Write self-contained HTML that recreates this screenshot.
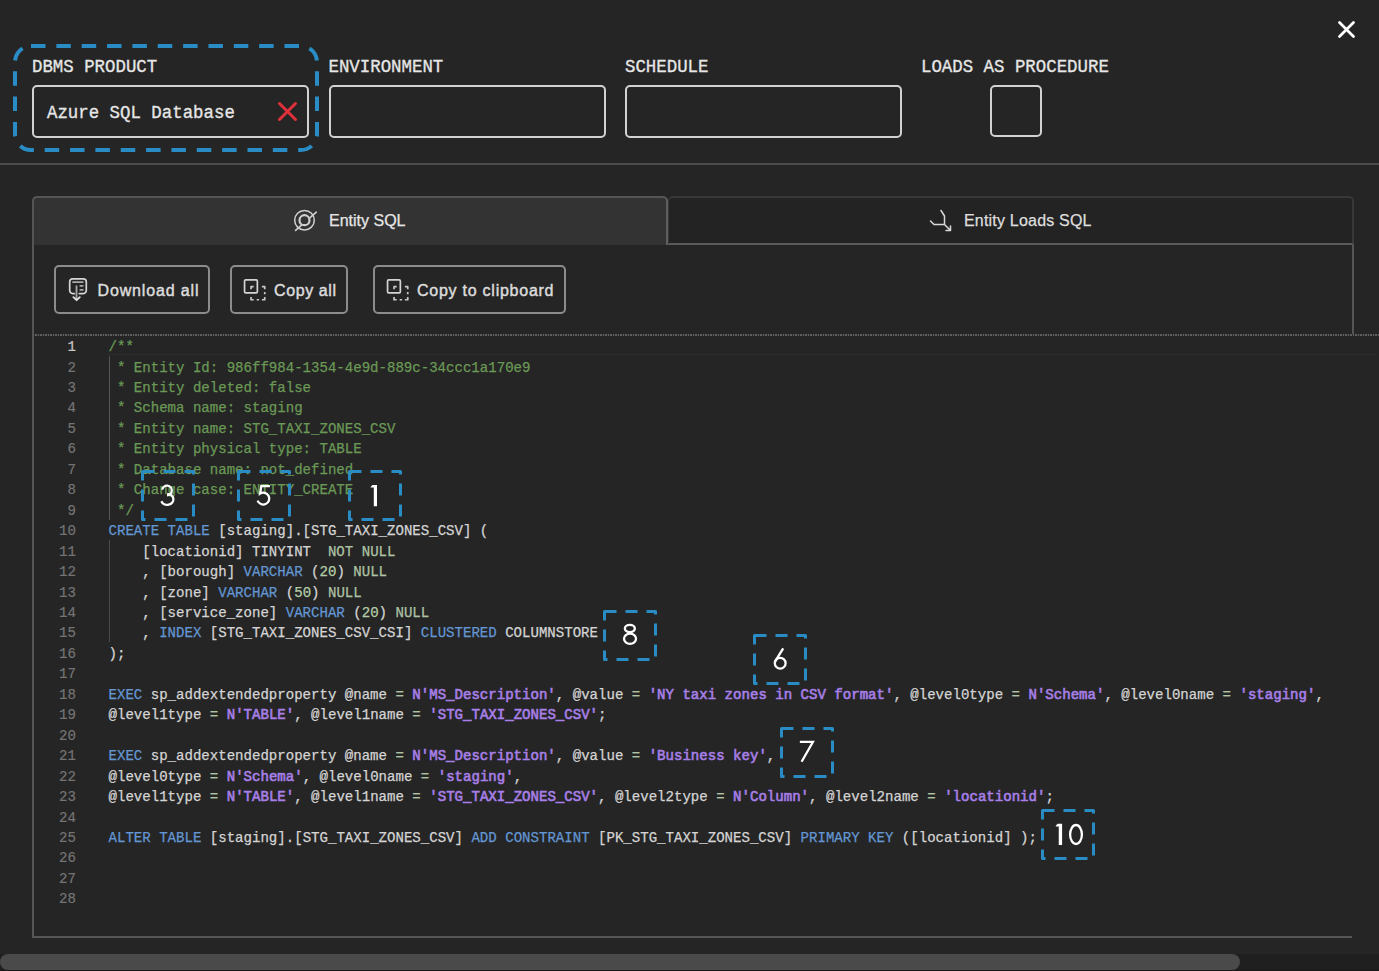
<!DOCTYPE html>
<html><head><meta charset="utf-8">
<style>
html,body{margin:0;padding:0;}
body{width:1379px;height:971px;overflow:hidden;background:#252525;position:relative;font-family:"Liberation Sans",sans-serif;}
.abs{position:absolute;}
.lbl{position:absolute;font-family:"Liberation Mono",monospace;font-size:17.4px;line-height:20px;color:#e6e6e6;white-space:pre;transform:scaleY(1.065);transform-origin:0 15px;-webkit-text-stroke:0.3px #e6e6e6;}
.inp{position:absolute;box-sizing:border-box;border:2px solid #d2d2d2;border-radius:5px;}
.tab{position:absolute;box-sizing:border-box;}
.btn{position:absolute;box-sizing:border-box;border:2px solid #8c8c8c;border-radius:5px;color:#dcdcdc;font-size:16px;letter-spacing:0.6px;-webkit-text-stroke:0.45px #dcdcdc;}
.btn span{position:absolute;line-height:20px;white-space:pre;}
.btn svg{position:absolute;}
.code{position:absolute;left:0;top:0;font-family:"Liberation Mono",monospace;font-size:14.072px;line-height:20.46px;white-space:pre;color:#d4d4d4;-webkit-text-stroke:0.25px currentColor;}
.ln{position:absolute;font-family:"Liberation Mono",monospace;font-size:14.072px;line-height:20.46px;white-space:pre;color:#747474;text-align:right;-webkit-text-stroke:0.2px currentColor;}
.c{color:#6a9955}
.k{color:#6396d2}
.s{color:#a77fe6;-webkit-text-stroke:0.6px #a77fe6}
.o{color:#aec3a4}
.n{color:#b5cea8}
.box{position:absolute;}
.dg{position:absolute;left:0;top:0;width:54px;height:51px;line-height:50px;text-align:center;font-size:30.5px;color:#fff;}
</style></head>
<body>
<!-- close X -->
<svg class="abs" style="left:1330px;top:13px" width="33" height="33" viewBox="0 0 33 33"><path d="M9.5 9.5L23.5 23.5M23.5 9.5L9.5 23.5" stroke="#fff" stroke-width="2.8" stroke-linecap="round"/></svg>

<!-- labels -->
<div class="lbl" style="left:32px;top:58.3px">DBMS PRODUCT</div>
<div class="lbl" style="left:328.5px;top:58.3px">ENVIRONMENT</div>
<div class="lbl" style="left:625px;top:58.3px">SCHEDULE</div>
<div class="lbl" style="left:921px;top:58.3px">LOADS AS PROCEDURE</div>

<!-- inputs -->
<div class="inp" style="left:32px;top:85px;width:277px;height:53px"></div>
<div class="lbl" style="left:47px;top:103.5px">Azure SQL Database</div>
<svg class="abs" style="left:276px;top:100px" width="23" height="23" viewBox="0 0 23 23"><path d="M3.5 3.5L19.5 19.5M19.5 3.5L3.5 19.5" stroke="#e0303a" stroke-width="3" stroke-linecap="round"/></svg>
<div class="inp" style="left:329px;top:85px;width:277px;height:53px"></div>
<div class="inp" style="left:625px;top:85px;width:277px;height:53px"></div>
<div class="inp" style="left:990px;top:85px;width:52px;height:52px"></div>

<!-- dashed highlight -->
<svg class="abs" style="left:0;top:0" width="340" height="170"><rect x="15" y="46" width="302" height="104" rx="16" fill="none" stroke="#2a8cc4" stroke-width="4" stroke-dasharray="14.5 10.85"/></svg>

<!-- divider -->
<div class="abs" style="left:0;top:163px;width:1379px;height:2px;background:#4c4c4c"></div>

<!-- tabs -->
<div class="tab" style="left:32px;top:196px;width:636px;height:49px;background:#333;border:2px solid #555;border-right-color:#5f5f5f;border-bottom:none;border-radius:5px 5px 0 0"></div>
<div class="tab" style="left:668px;top:196px;width:686px;height:49px;background:#232323;border:2px solid #383838;border-left:1px solid #383838;border-bottom:2px solid #5a5a5a;border-radius:5px 5px 0 0"></div>


<!-- tab labels -->
<svg class="abs" style="left:290px;top:206px" width="30" height="30" viewBox="0 0 30 30" fill="none" stroke="#d0d0d0"><circle cx="14.5" cy="14.2" r="9.8" stroke-width="1.5"/><path d="M5.6 24.4L26.3 6.2" stroke-width="1.6" stroke-linecap="round"/><circle cx="14.5" cy="14.2" r="5" stroke-width="2.2" fill="#333"/></svg>
<div class="abs" style="left:329px;top:211px;font-size:16px;line-height:20px;color:#e6e6e6;white-space:pre;-webkit-text-stroke:0.25px #e6e6e6">Entity SQL</div>
<svg class="abs" style="left:926px;top:206px" width="30" height="30" viewBox="0 0 30 30" fill="none" stroke="#d8d8d8" stroke-width="1.5" stroke-linecap="round" stroke-linejoin="round"><path d="M4.5 15L8 18.5H18.5V10L15 4.5M18.5 18.5L24.5 24.5M24.5 24.5H20M24.5 24.5V20"/></svg>
<div class="abs" style="left:964px;top:211px;font-size:16px;letter-spacing:0.2px;line-height:20px;color:#dedede;white-space:pre;-webkit-text-stroke:0.25px #dedede">Entity Loads SQL</div>

<!-- panel borders -->
<div class="abs" style="left:32px;top:244px;width:2px;height:694px;background:#555"></div>
<div class="abs" style="left:32px;top:936px;width:1320px;height:2px;background:#555"></div>
<div class="abs" style="left:1352px;top:244px;width:2px;height:91px;background:#555"></div>

<!-- buttons -->
<div class="btn" style="left:54px;top:265px;width:156px;height:49px"><svg style="left:8px;top:7px" width="30" height="30" viewBox="0 0 30 30" fill="none" stroke-linecap="round" stroke-linejoin="round"><path d="M10.3 19.6H8.7A3 3 0 0 1 5.7 16.6V7.8A3 3 0 0 1 8.7 4.8H19.3A3 3 0 0 1 22.3 7.8V16.6A3 3 0 0 1 19.3 19.6H15.3" stroke="#d4d4d4" stroke-width="1.7"/><path d="M8.3 8.1H19.5M15.6 11.8H19.5M15.6 15.8H19.5M12.5 11.6V25.3" stroke="#a8a8a8" stroke-width="1.8" stroke-linecap="butt"/><path d="M9.4 23.2L12.6 26.2L15.8 23.2" stroke="#e4e4e4" stroke-width="1.8"/></svg><span style="left:41.5px;top:14px;letter-spacing:0.85px">Download all</span></div>
<div class="btn" style="left:230px;top:265px;width:118px;height:49px"><svg style="left:8px;top:8px" width="30" height="30" viewBox="0 0 30 30" fill="none" stroke-linejoin="round"><rect x="4.55" y="4.85" width="12.8" height="13.1" rx="1.2" stroke="#d4d4d4" stroke-width="1.7"/><path d="M11.05 14.3V11.65H13.7M21.9 11.65H24.75V14.3M24.75 16.9V19.3M11.05 21.9V24.75H13.7M16.7 24.75H19.1M21.9 24.75H24.75V21.9" stroke="#c8c8c8" stroke-width="1.7"/></svg><span style="left:42px;top:14px">Copy all</span></div>
<div class="btn" style="left:373px;top:265px;width:193px;height:49px"><svg style="left:8px;top:8px" width="30" height="30" viewBox="0 0 30 30" fill="none" stroke-linejoin="round"><rect x="4.55" y="4.85" width="12.8" height="13.1" rx="1.2" stroke="#d4d4d4" stroke-width="1.7"/><path d="M11.05 14.3V11.65H13.7M21.9 11.65H24.75V14.3M24.75 16.9V19.3M11.05 21.9V24.75H13.7M16.7 24.75H19.1M21.9 24.75H24.75V21.9" stroke="#c8c8c8" stroke-width="1.7"/></svg><span style="left:42px;top:14px;letter-spacing:0.75px">Copy to clipboard</span></div>

<!-- dotted line -->
<div class="abs" style="left:33px;top:334px;width:1346px;height:2px;background:repeating-linear-gradient(90deg,#5e5e5e 0 1.25px,#2e2e2e 1.25px 2.5px)"></div>

<!-- code -->
<div class="code" style="left:108.5px;top:337.1px"><span class="c">/**</span>
<span class="c"> * Entity Id: 986ff984-1354-4e9d-889c-34ccc1a170e9</span>
<span class="c"> * Entity deleted: false</span>
<span class="c"> * Schema name: staging</span>
<span class="c"> * Entity name: STG_TAXI_ZONES_CSV</span>
<span class="c"> * Entity physical type: TABLE</span>
<span class="c"> * Database name: not_defined</span>
<span class="c"> * Change case: ENTITY_CREATE</span>
<span class="c"> */</span>
<span class="k">CREATE</span> <span class="k">TABLE</span> [staging].[STG_TAXI_ZONES_CSV] (
    [locationid] TINYINT  <span class="o">NOT</span> <span class="o">NULL</span>
    , [borough] <span class="k">VARCHAR</span> (<span class="n">20</span>) <span class="o">NULL</span>
    , [zone] <span class="k">VARCHAR</span> (<span class="n">50</span>) <span class="o">NULL</span>
    , [service_zone] <span class="k">VARCHAR</span> (<span class="n">20</span>) <span class="o">NULL</span>
    , <span class="k">INDEX</span> [STG_TAXI_ZONES_CSV_CSI] <span class="k">CLUSTERED</span> COLUMNSTORE
);

<span class="k">EXEC</span> sp_addextendedproperty @name <span class="o">=</span> <span class="s">N'MS_Description'</span>, @value <span class="o">=</span> <span class="s">'NY taxi zones in CSV format'</span>, @level0type <span class="o">=</span> <span class="s">N'Schema'</span>, @level0name <span class="o">=</span> <span class="s">'staging'</span>,
@level1type <span class="o">=</span> <span class="s">N'TABLE'</span>, @level1name <span class="o">=</span> <span class="s">'STG_TAXI_ZONES_CSV'</span>;

<span class="k">EXEC</span> sp_addextendedproperty @name <span class="o">=</span> <span class="s">N'MS_Description'</span>, @value <span class="o">=</span> <span class="s">'Business key'</span>,
@level0type <span class="o">=</span> <span class="s">N'Schema'</span>, @level0name <span class="o">=</span> <span class="s">'staging'</span>,
@level1type <span class="o">=</span> <span class="s">N'TABLE'</span>, @level1name <span class="o">=</span> <span class="s">'STG_TAXI_ZONES_CSV'</span>, @level2type <span class="o">=</span> <span class="s">N'Column'</span>, @level2name <span class="o">=</span> <span class="s">'locationid'</span>;

<span class="k">ALTER</span> <span class="k">TABLE</span> [staging].[STG_TAXI_ZONES_CSV] <span class="k">ADD</span> <span class="k">CONSTRAINT</span> [PK_STG_TAXI_ZONES_CSV] <span class="k">PRIMARY</span> <span class="k">KEY</span> ([locationid] );


</div>
<div class="ln" style="left:40px;width:36px;top:337.1px"><span style="color:#c8c8c8">1</span>
2
3
4
5
6
7
8
9
10
11
12
13
14
15
16
17
18
19
20
21
22
23
24
25
26
27
28</div>

<!-- indent guides / line highlight -->
<div class="abs" style="left:107px;top:336px;width:1269px;height:18px;border-bottom:1px solid #2c2c2c"></div>
<div class="abs" style="left:109px;top:355.5px;width:1.2px;height:164.5px;background:#555"></div>
<div class="abs" style="left:109px;top:539.5px;width:1.2px;height:102.2px;background:#4a4a4a"></div>
<!-- scrollbar -->
<div class="abs" style="left:0;top:954px;width:1379px;height:17px;background:#1f1f1f"></div>
<div class="abs" style="left:0;top:954px;width:1240px;height:15.5px;background:#4a4a4a;border-radius:8px"></div>
<div class="abs" style="left:0;top:970px;width:1379px;height:1px;background:#171717"></div>
<!-- overlays -->
<svg class="abs" style="left:0;top:0" width="1379" height="971" viewBox="0 0 1379 971">
<g fill="none" stroke="#2a8cc4" stroke-width="3" stroke-dasharray="12 9" stroke-linejoin="round"><rect x="142.5" y="471.5" width="51" height="48"/><rect x="238.5" y="471.5" width="51" height="48"/><rect x="349.5" y="471.5" width="51" height="48"/><rect x="604.5" y="611.5" width="51" height="48"/><rect x="754.5" y="635.5" width="51" height="48"/><rect x="781.5" y="728.5" width="51" height="48"/><rect x="1042.5" y="810.5" width="51" height="48"/></g>
<g fill="none" stroke="#fff" stroke-width="2.3" stroke-linecap="butt">
<path d="M162.27 489.67A4.8 4.8 0 1 1 167 495.3"/>
<path d="M167.2 493.85A6.2 5.5 0 1 1 161.37 501.23"/>
<path d="M269.9 486.15H261.3L260.1 493.6A6 5.9 0 1 1 257.6 500.6"/>
<ellipse cx="629.85" cy="628.5" rx="5.0" ry="3.6"/>
<ellipse cx="630.03" cy="638.73" rx="6.0" ry="5.2"/>
<path d="M783.2 648.3L775.3 661.2"/>
<circle cx="780.2" cy="663.2" r="5.4"/>
<path d="M799.85 741.95H812.9L801.6 761.8"/>
<ellipse cx="1076.0" cy="834.5" rx="5.9" ry="9.5"/>
</g>
<g fill="#fff">
<path d="M370.65 486.9L372.4 485H377V506.2H373.8V487.45H370.65Z"/>
<path d="M1055.8 825.7L1057.6 823.8H1062.1V845H1058.75V826.5H1055.8Z"/>
</g>
</svg>
</body></html>
